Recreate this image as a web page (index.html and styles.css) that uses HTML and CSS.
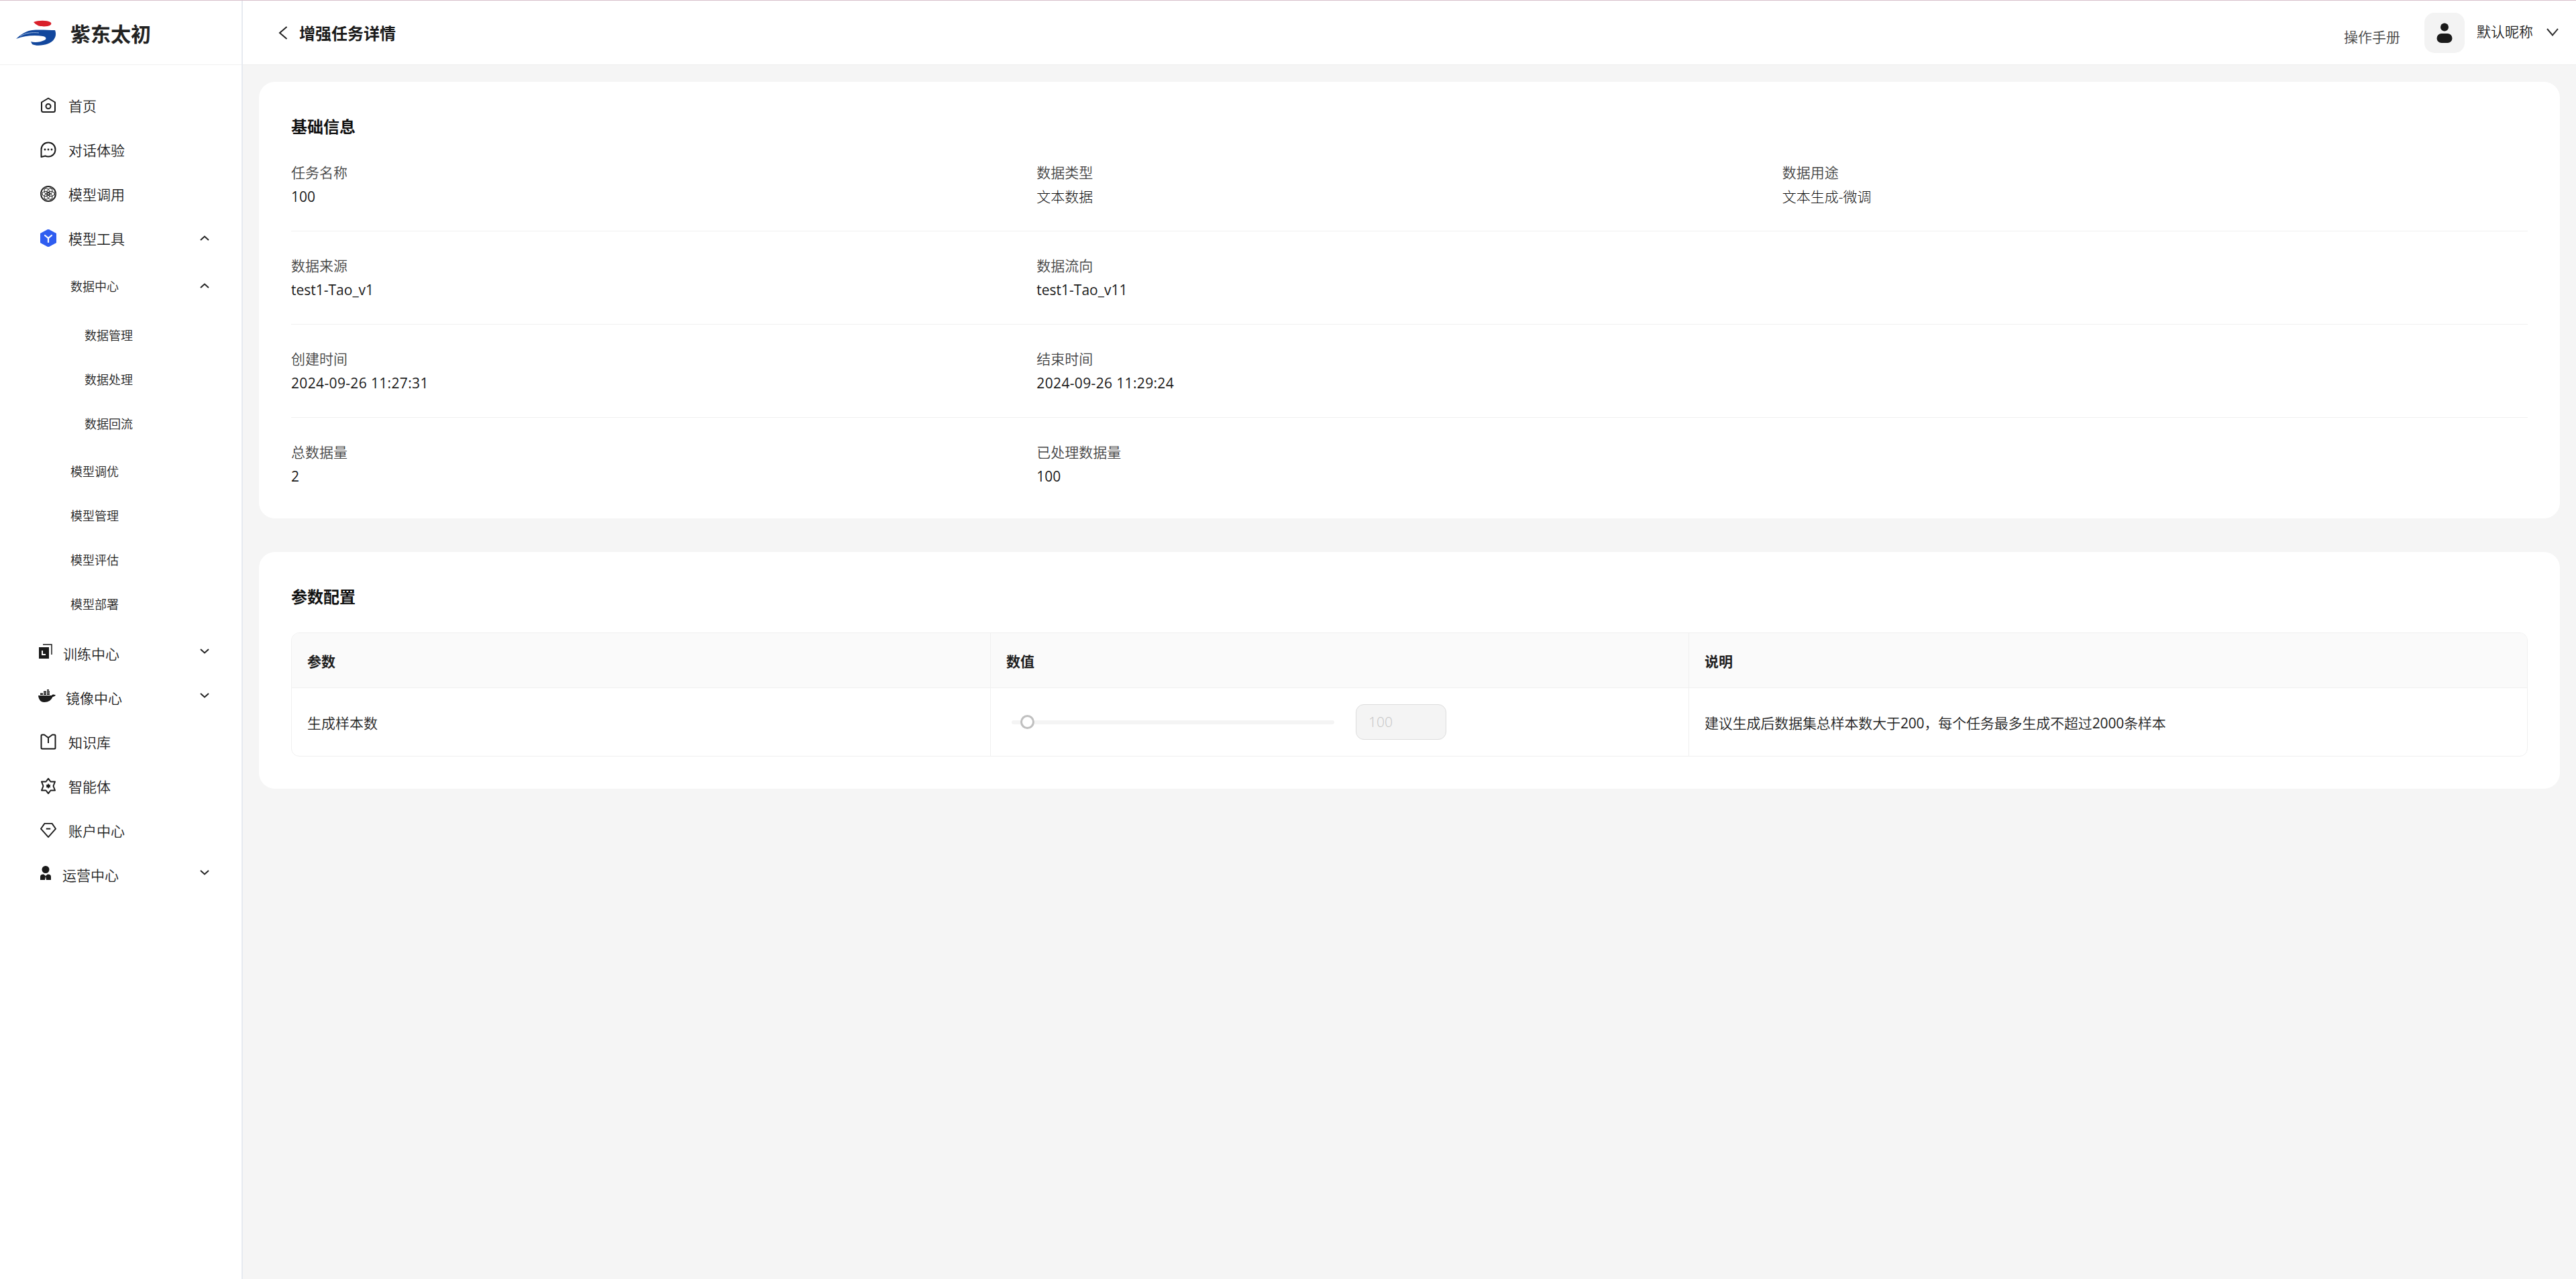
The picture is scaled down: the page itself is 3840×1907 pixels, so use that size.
FILE: index.html
```html
<!DOCTYPE html>
<html lang="zh-CN">
<head>
  <meta charset="UTF-8" />
  <title>增强任务详情</title>
  <link rel="stylesheet" href="styles.css">
</head>
<body>
  <div class="app">
    <aside class="sidebar">
      <div class="logo">
        <svg class="logo-mark" viewBox="0 0 60 38" width="60" height="38">
          <path d="M26 3C33 0 46 0 51 3C54 5 52 8 47 9C40 10 33 9 31 7C29 6 28 5 26 3Z" fill="#d9202a"/>
          <path d="M0 28C8 20 16 16 24 15C34 14 48 15 58 15C61 22 58 31 48 35C40 38 30 39 24 36L22 32C28 34 36 33 42 30C46 28 45 25 40 24C28 22 12 23 0 28Z" fill="#12479d"/>
          <path d="M6 24C14 19 24 18 34 19" fill="none" stroke="#9db8de" stroke-width="1"/>
        </svg>
        <span class="logo-text">紫东太初</span>
      </div>
      <nav class="nav">
        <a class="nav-item">
          <svg class="icon" viewBox="0 0 24 24"><path d="M12 1.500L2 7.500V19.500C2 21 3 22 4.500 22H19.500C21 22 22 21 22 19.500V7.500Z" fill="none" stroke="#1a1a1a" stroke-width="2" stroke-linejoin="round"/><circle cx="12" cy="13.500" r="3.500" fill="none" stroke="#1a1a1a" stroke-width="2"/></svg>
          首页
        </a>
        <a class="nav-item">
          <svg class="icon" viewBox="0 0 24 24"><path d="M12 1.500C6 1.500 1.500 6 1.500 12V23L7.500 21.500C9 22.200 10.500 22.500 12 22.500C18 22.500 22.500 18 22.500 12S18 1.500 12 1.500Z" fill="none" stroke="#1a1a1a" stroke-width="2" stroke-linejoin="round"/><circle cx="7" cy="12" r="1.400" fill="#1a1a1a"/><circle cx="12" cy="12" r="1.400" fill="#1a1a1a"/><circle cx="17" cy="12" r="1.400" fill="#1a1a1a"/></svg>
          对话体验
        </a>
        <a class="nav-item">
          <svg class="icon" viewBox="0 0 24 24" fill="none" stroke="#1a1a1a" stroke-width="1"><circle cx="12" cy="12" r="11.300" stroke-width="1.400"/><circle cx="12" cy="7.500" r="6"/><circle cx="12" cy="16.500" r="6"/><circle cx="8.100" cy="9.750" r="6"/><circle cx="15.900" cy="9.750" r="6"/><circle cx="8.100" cy="14.250" r="6"/><circle cx="15.900" cy="14.250" r="6"/></svg>
          模型调用
        </a>
        <a class="nav-item">
          <svg class="icon icon-tall" viewBox="0 0 24 26"><path d="M12 0L24 6.500V19.500L12 26L0 19.500V6.500Z" fill="#2f5df0" stroke="#2f5df0" stroke-linejoin="round"/><path d="M7 9L12 13L17 9M12 13V19" fill="none" stroke="#fff" stroke-width="2.200" stroke-linecap="round"/></svg>
          模型工具
          <svg class="chevron" viewBox="0 0 14 8"><path d="M1 7L7 1.500L13 7" /></svg>
        </a>

        <div class="submenu">
          <a class="sub-item">
            数据中心
            <svg class="chevron" viewBox="0 0 14 8"><path d="M1 7L7 1.500L13 7" /></svg>
          </a>
          <div class="submenu-inner">
            <a class="sub-item sub-item-deep">数据管理</a>
            <a class="sub-item sub-item-deep">数据处理</a>
            <a class="sub-item sub-item-deep">数据回流</a>
          </div>
          <a class="sub-item">模型调优</a>
          <a class="sub-item">模型管理</a>
          <a class="sub-item">模型评估</a>
          <a class="sub-item">模型部署</a>
        </div>

        <a class="nav-item nav-item-narrow">
          <svg class="icon icon-train" viewBox="0 0 20 22"><path d="M6 1H19V16" fill="none" stroke="#1a1a1a" stroke-width="1.500"/><path d="M0 5H15V22H0Z" fill="#1a1a1a"/><path d="M5 10V16H10" fill="none" stroke="#fff" stroke-width="2"/></svg>
          训练中心
          <svg class="chevron chevron-raised" viewBox="0 0 14 8"><path d="M1 1L7 6.500L13 1" /></svg>
        </a>
        <a class="nav-item nav-item-whale">
          <svg class="icon icon-whale" viewBox="0 0 26 19"><path d="M0 9H20C21 7 23 7 26 8.500C25 10 23 11 21.500 11C19.500 16 15 19 9 19C3 19 0.500 14 0 9Z" fill="#1a1a1a"/><path d="M3 5.500H7V8H3ZM8 5.500H12V8H8ZM13 5.500H17V8H13ZM8 2.500H12V4.800H8ZM13 2.500H17V4.800H13ZM13 0H16V1.800H13Z" fill="#1a1a1a"/></svg>
          镜像中心
          <svg class="chevron chevron-raised" viewBox="0 0 14 8"><path d="M1 1L7 6.500L13 1" /></svg>
        </a>
        <a class="nav-item">
          <svg class="icon" viewBox="0 0 24 24"><path d="M6 1.500H3C2 1.500 1.500 2 1.500 3V21C1.500 22 2 22.500 3 22.500H21C22 22.500 22.500 22 22.500 21V3C22.500 2 22 1.500 21 1.500H18L12 6L6 1.500ZM12 6V14" fill="none" stroke="#1a1a1a" stroke-width="2" stroke-linejoin="round"/></svg>
          知识库
        </a>
        <a class="nav-item">
          <svg class="icon" viewBox="0 0 24 24"><path d="M12 .8L15.500 5.500H22L19.500 12L22 18.500H15.500L12 23.200L8.500 18.500H2L4.500 12L2 5.500H8.500Z" fill="none" stroke="#1a1a1a" stroke-width="2" stroke-linejoin="round"/><path d="M12 8L13.200 10H15.500L14.300 12L15.500 14H13.200L12 16L10.800 14H8.500L9.700 12L8.500 10H10.800Z" fill="#1a1a1a"/></svg>
          智能体
        </a>
        <a class="nav-item">
          <svg class="icon" viewBox="0 0 26 24"><path d="M7 1H19L25 9.500L13 23L1 9.500Z" fill="none" stroke="#1a1a1a" stroke-width="2" stroke-linejoin="round"/><path d="M9.500 9.500H16.500" stroke="#1a1a1a" stroke-width="2.200"/></svg>
          账户中心
        </a>
        <a class="nav-item nav-item-narrow">
          <svg class="icon icon-person" viewBox="0 0 16 21"><circle cx="8" cy="5.500" r="5.500" fill="#1a1a1a"/><path d="M0 21V16C0 13.500 2 12.500 5 12.500L8 15L11 12.500C14 12.500 16 13.500 16 16V21H9L8 15.500L7 21Z" fill="#1a1a1a"/></svg>
          运营中心
          <svg class="chevron chevron-raised" viewBox="0 0 14 8"><path d="M1 1L7 6.500L13 1" /></svg>
        </a>
      </nav>
    </aside>

    <div class="main">
      <header class="topbar">
        <svg class="back" viewBox="0 0 14 20"><path d="M12.500 1L2 10L12.500 19" /></svg>
        <h1 class="page-title">增强任务详情</h1>
        <a class="manual">操作手册</a>
        <div class="avatar">
          <svg viewBox="0 0 24 30" width="24" height="30"><circle cx="12" cy="6.500" r="6" fill="#1a1a1a"/><rect x="0.500" y="16" width="23" height="14" rx="7" fill="#1a1a1a"/></svg>
        </div>
        <span class="nickname">默认昵称</span>
        <svg class="user-caret" viewBox="0 0 18 12"><path d="M1 1L9 10.500L17 1" /></svg>
      </header>

      <main class="content">
        <section class="card card-info">
          <h2 class="card-title">基础信息</h2>
          <div class="info-row">
            <div class="field"><div class="field-label">任务名称</div><div class="field-value">100</div></div>
            <div class="field"><div class="field-label">数据类型</div><div class="field-value field-cjk">文本数据</div></div>
            <div class="field"><div class="field-label">数据用途</div><div class="field-value field-cjk">文本生成-微调</div></div>
          </div>
          <div class="info-row">
            <div class="field"><div class="field-label">数据来源</div><div class="field-value">test1-Tao_v1</div></div>
            <div class="field"><div class="field-label">数据流向</div><div class="field-value">test1-Tao_v11</div></div>
          </div>
          <div class="info-row">
            <div class="field"><div class="field-label">创建时间</div><div class="field-value field-date">2024-09-26 11:27:31</div></div>
            <div class="field"><div class="field-label">结束时间</div><div class="field-value field-date">2024-09-26 11:29:24</div></div>
          </div>
          <div class="info-row">
            <div class="field"><div class="field-label">总数据量</div><div class="field-value">2</div></div>
            <div class="field"><div class="field-label">已处理数据量</div><div class="field-value">100</div></div>
          </div>
        </section>

        <section class="card">
          <h2 class="card-title">参数配置</h2>
          <div class="param-table">
            <div class="param-row param-head">
              <div class="param-cell">参数</div>
              <div class="param-cell">数值</div>
              <div class="param-cell">说明</div>
            </div>
            <div class="param-row param-body">
              <div class="param-cell">生成样本数</div>
              <div class="param-cell slider-cell">
                <div class="slider"><span class="slider-handle"></span></div>
                <div class="num-input">100</div>
              </div>
              <div class="param-cell param-note"><p class="note-text">建议生成后数据集总样本数大于<span class="num">200</span>，每个任务最多生成不超过<span class="num">2000</span>条样本</p></div>
            </div>
          </div>
        </section>
      </main>
    </div>
  </div>
</body>
</html>
```

FILE: styles.css
```css
html, body {
  margin: 0;
  padding: 0;
  height: 100%;
  background-color: #f5f5f5;
  font-family: "Open Sans", "Noto Sans CJK SC", sans-serif;
  font-size: 21px;
  font-weight: 350;
  color: #1d1d1d;
  overflow: hidden;
}

.app {
  display: flex;
  height: 100%;
  box-sizing: border-box;
  border-top: 1px solid #d8c0cb;
}

/* sidebar */
.sidebar {
  width: 362px;
  flex: none;
  box-sizing: border-box;
  background-color: #fff;
  border-right: 2px solid #e6eaf0;
}

.logo {
  display: flex;
  align-items: center;
  height: 96px;
  box-sizing: border-box;
  padding-left: 24px;
  border-bottom: 1px solid #f0f0f0;
}

.logo-mark {
  flex: none;
  margin-right: 21px;
}

.logo-text {
  font-size: 30px;
  font-weight: 700;
  color: #222;
}

.nav {
  padding-top: 27px;
}

.nav-item, .sub-item {
  display: flex;
  align-items: center;
  height: 66px;
  color: #222;
}

.nav-item {
  padding-left: 60px;
  padding-right: 48px;
}

.icon {
  width: 24px;
  height: 24px;
  flex: none;
  margin-right: 18px;
}

.icon-tall {
  height: 26px;
}

.nav-item-narrow .icon {
  margin-right: 16px;
}

.icon-train {
  width: 20px;
  height: 22px;
  margin-left: -2px;
  margin-bottom: 6px;
}

.nav-item-whale {
  padding-left: 57px;
}

.icon-whale {
  width: 26px;
  height: 19px;
  margin-right: 15px;
  margin-bottom: 5px;
}

.nav-item-narrow .icon-person {
  width: 16px;
  height: 21px;
  margin-right: 17px;
  margin-bottom: 6px;
}

.chevron {
  width: 14px;
  height: 8px;
  margin-left: auto;
  flex: none;
  fill: none;
  stroke: #222;
  stroke-width: 2;
}

.chevron-raised {
  margin-bottom: 6px;
}

.submenu {
  padding: 5px 0 8px;
}

.submenu-inner {
  padding: 7px 0 5px;
}

.sub-item {
  padding-left: 105px;
  padding-right: 48px;
  font-size: 18px;
}

.sub-item-deep {
  padding-left: 126px;
}

/* top bar */
.main {
  flex: 1;
  min-width: 0;
}

.topbar {
  display: flex;
  align-items: center;
  height: 96px;
  box-sizing: border-box;
  padding: 0 26px 0 53px;
  background-color: #fff;
  border-bottom: 1px solid #eee;
}

.back {
  width: 14px;
  height: 20px;
  flex: none;
  fill: none;
  stroke: #222;
  stroke-width: 2;
  margin-right: 17px;
}

.page-title {
  margin: 0;
  font-size: 24px;
  font-weight: 700;
  color: #1a1a1a;
}

.manual {
  margin-left: auto;
  margin-top: 10px;
  color: #444;
}

.avatar {
  display: flex;
  align-items: center;
  justify-content: center;
  width: 60px;
  height: 60px;
  margin-left: 36px;
  background-color: #f3f3f3;
  border-radius: 15px;
}

.nickname {
  margin-left: 18px;
  margin-bottom: 5px;
  color: #222;
}

.user-caret {
  width: 18px;
  height: 12px;
  margin-left: 20px;
  margin-bottom: 2px;
  fill: none;
  stroke: #333;
  stroke-width: 2;
}

/* cards */
.content {
  padding: 25px 24px;
}

.card {
  padding: 48px;
  background-color: #fff;
  border-radius: 24px;
}

.card-info {
  padding-bottom: 45px;
  margin-bottom: 50px;
}

.card-title {
  margin: 0 0 34px;
  font-size: 24px;
  font-weight: 700;
  line-height: 38px;
  color: #111;
}

.card-info .card-title {
  margin-bottom: 31px;
}

.info-row {
  display: grid;
  grid-template-columns: repeat(3, 1fr);
  padding-bottom: 33px;
  margin-bottom: 33px;
  border-bottom: 1px solid #f0f0f0;
}

.info-row:last-child {
  padding-bottom: 0;
  margin-bottom: 0;
  border-bottom: none;
}

.field-label, .field-value {
  line-height: 36px;
}

.field-label {
  color: #444;
}

.field-value {
  color: #1a1a1a;
  font-weight: 400;
}

.field-value.field-cjk {
  font-weight: 300;
  color: #111;
}

.field-date {
  letter-spacing: 0.35px;
}

/* parameter table */
.param-table {
  border: 1px solid #f0f0f0;
  border-radius: 12px;
  overflow: hidden;
}

.param-row {
  display: grid;
  grid-template-columns: 1041px 1041px 1fr;
}

.param-head {
  height: 81px;
  background-color: #fafafa;
  font-weight: 700;
  border-bottom: 1px solid #f0f0f0;
}

.param-body {
  height: 101px;
  color: #222;
}

.param-cell {
  display: flex;
  align-items: center;
  padding-left: 23px;
  border-left: 1px solid #f0f0f0;
}

.param-cell:first-child {
  border-left: none;
}

.note-text {
  margin: 0;
  letter-spacing: -0.15px;
}

.num {
  font-weight: 400;
}

.slider-cell {
  padding-left: 31px;
}

.slider {
  position: relative;
  width: 481px;
  height: 6px;
  background-color: #f4f4f4;
  border-radius: 3px;
}

.slider-handle {
  position: absolute;
  left: 13px;
  top: -8px;
  width: 21px;
  height: 21px;
  box-sizing: border-box;
  background-color: #fff;
  border: 3px solid #bfbfbf;
  border-radius: 50%;
}

.num-input {
  width: 135px;
  height: 53px;
  box-sizing: border-box;
  margin-left: 32px;
  padding-left: 18px;
  line-height: 51px;
  background-color: #f4f4f4;
  border: 1px solid #ddd;
  border-radius: 12px;
  color: #c4c4c4;
}
```
